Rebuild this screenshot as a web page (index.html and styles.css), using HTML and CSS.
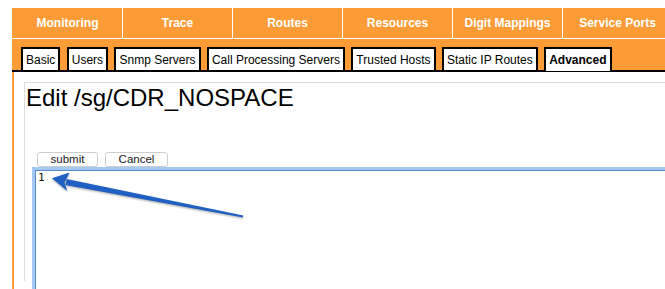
FILE: index.html
```html
<!DOCTYPE html>
<html>
<head>
<meta charset="utf-8">
<title>Edit /sg/CDR_NOSPACE</title>
<link rel="stylesheet" href="styles.css">
</head>
<body>
<div class="app">
  <nav class="topnav">
    <div class="topnav-item">Monitoring</div>
    <div class="topnav-item">Trace</div>
    <div class="topnav-item">Routes</div>
    <div class="topnav-item">Resources</div>
    <div class="topnav-item">Digit Mappings</div>
    <div class="topnav-item">Service Ports</div>
  </nav>
  <div class="subnav">
    <div class="tab">Basic</div>
    <div class="tab">Users</div>
    <div class="tab">Snmp Servers</div>
    <div class="tab">Call Processing Servers</div>
    <div class="tab">Trusted Hosts</div>
    <div class="tab">Static IP Routes</div>
    <div class="tab tab-active">Advanced</div>
  </div>
  <main class="main">
    <section class="panel">
      <h1 class="title">Edit /sg/CDR_NOSPACE</h1>
      <form class="form">
        <div class="buttons">
          <button type="button" class="btn btn-submit">submit</button>
          <button type="button" class="btn btn-cancel">Cancel</button>
        </div>
        <textarea class="editor" readonly>1</textarea>
      </form>
    </section>
  </main>
</div>
<svg class="arrow" width="665" height="289" viewBox="0 0 665 289">
  <polygon points="66.6,179 243.2,215.6 242.8,217.4 65.4,185" fill="#1f60c2"/>
  <polygon points="52,178.3 69.6,172.4 64.5,182.4 67.3,191" fill="#1f60c2"/>
</svg>
</body>
</html>
```
FILE: styles.css
```css
html, body {
  margin: 0;
  padding: 0;
  overflow: hidden;
  width: 665px;
  height: 289px;
  background: #ffffff;
}

body {
  position: relative;
  padding: 8px 0 0 12px;
  box-sizing: border-box;
  font-family: "Liberation Sans", Arial, sans-serif;
}

.app {
  width: 653px;
  height: 281px;
  overflow: hidden;
}

.topnav {
  display: flex;
  background: #fd9c36;
  padding-left: 1px;
  border-bottom: 1px solid #ffffff;
}

.topnav-item {
  box-sizing: border-box;
  width: 110px;
  flex: none;
  height: 30px;
  border-right: 1px solid #ffffff;
  color: #ffffff;
  font-weight: bold;
  font-size: 12px;
  display: flex;
  align-items: center;
  justify-content: center;
}

.subnav {
  display: flex;
  align-items: flex-end;
  gap: 6.4px;
  background: #fd9c36;
  padding: 8px 0 0 9px;
  border-bottom: 2px solid #000000;
}

.tab {
  box-sizing: border-box;
  height: 23px;
  flex: none;
  padding: 0 3px;
  border: 2px solid #000000;
  border-bottom: none;
  background: #ffffff;
  color: #000000;
  font-size: 12px;
  display: flex;
  align-items: center;
}

.tab-active {
  font-weight: bold;
  height: 24px;
  margin-bottom: -1px;
  padding-bottom: 1px;
}

.main {
  background: #ffffff;
  border-left: 2px solid #fd9c36;
  padding: 10px 0 0 10px;
  height: 209px;
}

.panel {
  border-top: 1px solid #dcdcdc;
  border-left: 1px solid #dcdcdc;
  height: 198px;
}

.title {
  margin: 1px 0 0 1px;
  font-size: 24px;
  line-height: 28px;
  font-weight: normal;
  color: #000000;
}

.form {
  margin: 40px 0 0 0;
  padding-left: 10px;
}

.buttons {
  display: flex;
  gap: 7px;
  margin-left: 2px;
  height: 15px;
}

.btn {
  box-sizing: border-box;
  height: 15px;
  padding: 0;
  border: 1px solid #cdcdcd;
  border-radius: 3px;
  background: #ffffff;
  font-family: "Liberation Sans", Arial, sans-serif;
  font-size: 11.5px;
  line-height: 13px;
  color: #1a1a1a;
}

.btn-submit {
  width: 61px;
}

.btn-cancel {
  width: 63px;
}

.editor {
  display: block;
  box-sizing: border-box;
  margin: 3px 0 0 0;
  width: 640px;
  height: 120px;
  padding: 0 2px;
  border: 1px solid #5a8bcb;
  outline: 3px solid #a2c8f3;
  resize: none;
  font-family: "DejaVu Sans Mono", "Liberation Mono", monospace;
  font-size: 11px;
  line-height: 13px;
  color: #111111;
  background: #ffffff;
}

.arrow {
  position: absolute;
  left: 0;
  top: 0;
  pointer-events: none;
  filter: drop-shadow(0 1px 1px rgba(0, 0, 0, 0.35));
}
```
